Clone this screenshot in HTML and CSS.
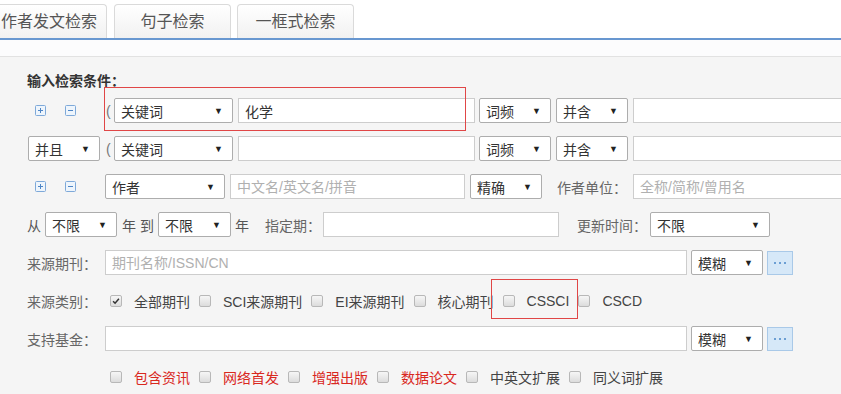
FILE: index.html
```html
<!DOCTYPE html>
<html lang="zh-CN">
<head>
    <meta charset="UTF-8">
    <title>高级检索</title>
    <link rel="stylesheet" href="styles.css">
</head>
<body>
    <div class="tabs">
        <div class="tab first">作者发文检索</div>
        <div class="tab">句子检索</div>
        <div class="tab">一框式检索</div>
    </div>
    <div class="band"></div>

    <div class="panel">
        <div class="title">输入检索条件：</div>

        <!-- 第一行 -->
        <div class="row">
            <div class="ops w79">
                <svg class="op" viewBox="0 0 11 11"><rect x="0.5" y="0.5" width="10" height="10" rx="1"/><path d="M3 5.5h5M5.5 3v5"/></svg>
                <svg class="op" viewBox="0 0 11 11"><rect x="0.5" y="0.5" width="10" height="10" rx="1"/><path d="M3 5.5h5"/></svg>
            </div>
            <span class="paren">(</span>
            <div class="sel w119">关键词<i>▼</i></div>
            <input class="inp w237 ml5" value="化学">
            <div class="sel w72 ml4">词频<i>▼</i></div>
            <div class="sel w72 ml5">并含<i>▼</i></div>
            <input class="inp w250 ml5">
        </div>

        <!-- 第二行 -->
        <div class="row">
            <div class="sel w72 first-sel">并且<i>▼</i></div>
            <span class="paren ml6">(</span>
            <div class="sel w119">关键词<i>▼</i></div>
            <input class="inp w237 ml5">
            <div class="sel w72 ml4">词频<i>▼</i></div>
            <div class="sel w72 ml5">并含<i>▼</i></div>
            <input class="inp w250 ml5">
        </div>

        <!-- 作者 -->
        <div class="row">
            <div class="ops w78">
                <svg class="op" viewBox="0 0 11 11"><rect x="0.5" y="0.5" width="10" height="10" rx="1"/><path d="M3 5.5h5M5.5 3v5"/></svg>
                <svg class="op" viewBox="0 0 11 11"><rect x="0.5" y="0.5" width="10" height="10" rx="1"/><path d="M3 5.5h5"/></svg>
            </div>
            <div class="sel w120">作者<i>▼</i></div>
            <input class="inp w235 ml5" placeholder="中文名/英文名/拼音">
            <div class="sel w72 ml5">精确<i>▼</i></div>
            <span class="label-sm ml15">作者单位：</span>
            <input class="inp w250 ml6" placeholder="全称/简称/曾用名">
        </div>

        <!-- 时间 -->
        <div class="row">
            <span class="txt">从</span>
            <div class="sel w72 ml4">不限<i>▼</i></div>
            <span class="txt ml5">年 到</span>
            <div class="sel w73 ml4">不限<i>▼</i></div>
            <span class="txt ml4">年</span>
            <span class="label-sm ml16">指定期：</span>
            <input class="inp w236 ml2">
            <span class="label-sm ml18">更新时间：</span>
            <div class="sel w120 ml3">不限<i>▼</i></div>
        </div>

        <!-- 来源期刊 -->
        <div class="row">
            <span class="label">来源期刊：</span>
            <input class="inp w582" placeholder="期刊名称/ISSN/CN">
            <div class="sel w72 ml4">模糊<i>▼</i></div>
            <div class="more ml4"><b></b><b></b><b></b></div>
        </div>

        <!-- 来源类别 -->
        <div class="row">
            <span class="label">来源类别：</span>
            <div class="checks pl5">
                <span class="cb on"><svg viewBox="0 0 12 12"><path d="M2.5 6.2l2.4 2.4 4.6-5.4"/></svg></span><span class="cl">全部期刊</span>
                <span class="cb"></span><span class="cl">SCI来源期刊</span>
                <span class="cb"></span><span class="cl">EI来源期刊</span>
                <span class="cb"></span><span class="cl">核心期刊</span>
                <span class="cb"></span><span class="cl">CSSCI</span>
                <span class="cb"></span><span class="cl">CSCD</span>
            </div>
        </div>

        <!-- 支持基金 -->
        <div class="row">
            <span class="label">支持基金：</span>
            <input class="inp w582">
            <div class="sel w72 ml4">模糊<i>▼</i></div>
            <div class="more ml4"><b></b><b></b><b></b></div>
        </div>

        <!-- 扩展选项 -->
        <div class="row">
            <div class="checks pl83">
                <span class="cb"></span><span class="cl red">包含资讯</span>
                <span class="cb"></span><span class="cl red">网络首发</span>
                <span class="cb"></span><span class="cl red">增强出版</span>
                <span class="cb"></span><span class="cl red">数据论文</span>
                <span class="cb"></span><span class="cl">中英文扩展</span>
                <span class="cb"></span><span class="cl">同义词扩展</span>
            </div>
        </div>
    </div>

    <!-- 标注框 -->
    <div class="mark mark-kw"></div>
    <div class="mark mark-cssci"></div>
</body>
</html>
```

FILE: styles.css
```css
/* General */
body {
    margin: 0;
    font-family: "Liberation Sans", "Noto Sans CJK SC", sans-serif;
    font-size: 14px;
    color: #333;
    background: #f5f5f5;
    overflow: hidden;
    position: relative;
}

/* Tabs */
.tabs {
    display: flex;
    align-items: flex-end;
    height: 38px;
    background: #fff;
    border-bottom: 2px solid #6897d0;
}

.tab {
    flex-shrink: 0;
    box-sizing: border-box;
    width: 117px;
    height: 34px;
    margin-right: 6px;
    border: 1px solid #dadada;
    border-bottom: none;
    border-radius: 4px 4px 0 0;
    background: linear-gradient(#ffffff, #f1f1f1);
    font-size: 16px;
    line-height: 33px;
    text-align: center;
    color: #555;
}

.tab.first {
    width: 116px;
    margin-left: -9px;
    margin-right: 7px;
}

.band {
    height: 16px;
    background: #fcfcfd;
    border-bottom: 1px solid #e2e2e2;
}

/* Panel */
.panel {
    padding: 14px 0 0 27px;
    height: 320px;
}

.title {
    font-size: 14px;
    font-weight: bold;
    line-height: 20px;
    margin-bottom: 7px;
    color: #333;
}

.row {
    display: flex;
    align-items: center;
    height: 25px;
    margin-bottom: 13px;
    white-space: nowrap;
}

.row > *,
.checks > * {
    flex-shrink: 0;
}

.ops {
    display: flex;
    align-items: center;
    height: 25px;
    padding-left: 8px;
    box-sizing: border-box;
}

.op {
    flex-shrink: 0;
    width: 11px;
    height: 11px;
    margin-right: 19px;
}

.op rect {
    fill: #eef5fc;
    stroke: #7ea9d9;
}

.op path {
    stroke: #4f86c6;
    stroke-width: 1;
    fill: none;
}

.paren {
    width: 8px;
    color: #777;
    font-size: 14px;
}

/* Selects */
.sel {
    box-sizing: border-box;
    display: flex;
    align-items: center;
    justify-content: space-between;
    height: 25px;
    padding: 0 9px 0 6px;
    background: #fff;
    border: 1px solid #adadad;
    border-radius: 2px;
    font-size: 14px;
    color: #333;
}

.sel i {
    font-style: normal;
    font-size: 9px;
    color: #222;
}

.first-sel {
    margin-left: 1px;
}

/* Inputs */
.inp {
    box-sizing: border-box;
    height: 25px;
    margin: 0;
    padding: 0 6px;
    background: #fff;
    border: 1px solid #cdcdcd;
    border-radius: 0;
    font-family: "Liberation Sans", "Noto Sans CJK SC", sans-serif;
    font-size: 14px;
    color: #333;
    outline: none;
}

.inp::placeholder {
    color: #b0b0b0;
}

.txt {
    color: #555;
}

.label,
.label-sm {
    color: #666;
    font-size: 14px;
}

.label {
    width: 78px;
}

/* "..." button */
.more {
    box-sizing: border-box;
    display: flex;
    align-items: center;
    justify-content: center;
    gap: 3px;
    width: 26px;
    height: 24px;
    background: #d6e8f8;
    border: 1px solid #a9c9e8;
}

.more b {
    width: 2px;
    height: 2px;
    background: #6c9fd4;
}

/* Checkboxes */
.checks {
    display: flex;
    align-items: center;
}

.cb {
    box-sizing: border-box;
    display: inline-block;
    width: 12px;
    height: 12px;
    margin-right: 12px;
    border: 1px solid #b8b8b8;
    border-radius: 2px;
    background: linear-gradient(#f6f6f6, #dcdcdc);
}

.cb svg {
    display: block;
    width: 10px;
    height: 10px;
}

.cb svg path {
    fill: none;
    stroke: #333;
    stroke-width: 1.8;
}

.cl {
    margin-right: 9px;
    font-size: 14px;
    color: #444;
}

.cl.red {
    color: #d9281e;
}

/* Widths & spacing */
.w72 { width: 72px; }
.w73 { width: 73px; }
.w78 { width: 78px; }
.w79 { width: 79px; }
.w119 { width: 119px; }
.w120 { width: 120px; }
.w235 { width: 235px; }
.w236 { width: 236px; }
.w237 { width: 237px; }
.w250 { width: 250px; }
.w582 { width: 582px; }
.ml2 { margin-left: 2px; }
.ml3 { margin-left: 3px; }
.ml4 { margin-left: 4px; }
.ml5 { margin-left: 5px; }
.ml6 { margin-left: 6px; }
.ml15 { margin-left: 15px; }
.ml16 { margin-left: 16px; }
.ml18 { margin-left: 18px; }
.pl5 { padding-left: 5px; }
.pl83 { padding-left: 83px; }

/* Annotation boxes */
.mark {
    position: absolute;
    border: 1px solid #e04646;
    pointer-events: none;
}

.mark-kw {
    left: 104px;
    top: 87px;
    width: 360px;
    height: 42px;
}

.mark-cssci {
    left: 491px;
    top: 279px;
    width: 85px;
    height: 38px;
}
```
